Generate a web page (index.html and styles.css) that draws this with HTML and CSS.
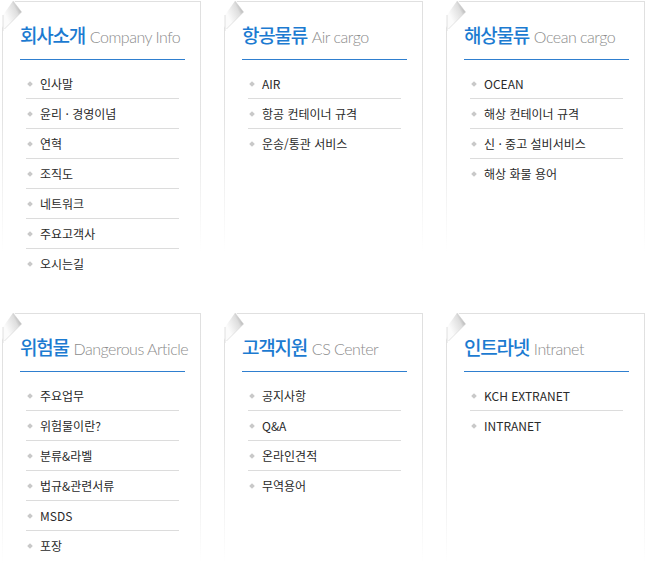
FILE: index.html
```html
<!DOCTYPE html>
<html lang="ko">
<head>
<meta charset="utf-8">
<title>Sitemap</title>
<link rel="stylesheet" href="styles.css">
</head>
<body>
<svg width="0" height="0" class="defs">
  <defs>
    <linearGradient id="curl" x1="0.9" y1="0.1" x2="0.2" y2="0.6">
      <stop offset="0" stop-color="#a8a8a8"/>
      <stop offset="0.35" stop-color="#dedede"/>
      <stop offset="1" stop-color="#fbfbfb"/>
    </linearGradient>
    <symbol id="corner" viewBox="0 0 22 30">
      <polygon points="0,0 13,0 0,27" fill="#fff"/>
      <polygon points="11,0 19.5,11 2.5,28 1,28 1,14" fill="url(#curl)"/>
      <polyline points="11,0 19.5,11 2.5,28" fill="none" stroke="#d2d2d2" stroke-width="0.6"/>
      <line x1="1" y1="14" x2="1" y2="30" stroke="#e0e0e0" stroke-width="1"/>
    </symbol>
  </defs>
</svg>
<div class="grid">
  <section class="card">
    <svg class="curl"><use href="#corner"/></svg>
    <h2 class="title"><span class="ko">회사소개</span> <span class="en">Company Info</span></h2>
    <ul class="menu">
      <li>인사말</li>
      <li>윤리 · 경영이념</li>
      <li>연혁</li>
      <li>조직도</li>
      <li>네트워크</li>
      <li>주요고객사</li>
      <li>오시는길</li>
    </ul>
  </section>
  <section class="card">
    <svg class="curl"><use href="#corner"/></svg>
    <h2 class="title"><span class="ko">항공물류</span> <span class="en">Air cargo</span></h2>
    <ul class="menu">
      <li>AIR</li>
      <li>항공 컨테이너 규격</li>
      <li>운송/통관 서비스</li>
    </ul>
  </section>
  <section class="card">
    <svg class="curl"><use href="#corner"/></svg>
    <h2 class="title"><span class="ko">해상물류</span> <span class="en">Ocean cargo</span></h2>
    <ul class="menu">
      <li>OCEAN</li>
      <li>해상 컨테이너 규격</li>
      <li>신 · 중고 설비서비스</li>
      <li>해상 화물 용어</li>
    </ul>
  </section>
  <section class="card">
    <svg class="curl"><use href="#corner"/></svg>
    <h2 class="title"><span class="ko">위험물</span> <span class="en">Dangerous Article</span></h2>
    <ul class="menu">
      <li>주요업무</li>
      <li>위험물이란?</li>
      <li>분류&amp;라벨</li>
      <li>법규&amp;관련서류</li>
      <li>MSDS</li>
      <li>포장</li>
    </ul>
  </section>
  <section class="card">
    <svg class="curl"><use href="#corner"/></svg>
    <h2 class="title"><span class="ko">고객지원</span> <span class="en">CS Center</span></h2>
    <ul class="menu">
      <li>공지사항</li>
      <li>Q&amp;A</li>
      <li>온라인견적</li>
      <li>무역용어</li>
    </ul>
  </section>
  <section class="card">
    <svg class="curl"><use href="#corner"/></svg>
    <h2 class="title"><span class="ko">인트라넷</span> <span class="en">Intranet</span></h2>
    <ul class="menu">
      <li>KCH EXTRANET</li>
      <li>INTRANET</li>
    </ul>
  </section>
</div>
</body>
</html>
```

FILE: styles.css
```css
html, body {
  margin: 0;
  padding: 0;
  background: #fff;
  overflow: hidden;
}

body {
  font-family: "Noto Sans CJK KR", "Noto Sans", sans-serif;
  color: #333;
}

.defs {
  position: absolute;
  width: 0;
  height: 0;
}

.grid {
  display: grid;
  grid-template-columns: repeat(3, 199px);
  grid-auto-rows: 290px;
  column-gap: 23px;
  row-gap: 22px;
  padding: 1px 0 0 2px;
}

.card {
  position: relative;
  box-sizing: border-box;
  border: 1px solid #e0e0e0;
  border-bottom: 0;
  border-image: linear-gradient(to bottom, #e0e0e0 0%, #e3e3e3 40%, rgba(255,255,255,0) 86%) 1;
  padding: 16px 15px 0 17px;
}

.curl {
  position: absolute;
  left: -1px;
  top: -1px;
  width: 22px;
  height: 30px;
}

.title {
  margin: 0;
  height: 30px;
  line-height: 30px;
  padding-bottom: 11px;
  border-bottom: 1px solid #2f7fcf;
  font-weight: normal;
  white-space: nowrap;
}

.ko {
  font-family: "Noto Sans CJK KR", sans-serif;
  font-size: 19px;
  font-weight: 500;
  letter-spacing: -1.2px;
  color: #1c7bd1;
}

.en {
  font-family: Lato, "Open Sans", sans-serif;
  font-weight: 300;
  font-size: 16px;
  letter-spacing: -0.5px;
  color: #8c8c8c;
  margin-left: -2px;
}

.menu {
  list-style: none;
  margin: 9px 6px 0 6px;
  padding: 0;
}

.menu li {
  position: relative;
  height: 29px;
  line-height: 29px;
  padding-left: 14px;
  font-size: 12px;
  color: #2a2a2a;
  border-bottom: 1px solid #dcdcdc;
  white-space: nowrap;
}

.menu li:last-child {
  border-bottom: 0;
}

.menu li::before {
  content: "";
  position: absolute;
  left: 2px;
  top: 13px;
  width: 4px;
  height: 4px;
  background: #c9c9c9;
  transform: rotate(45deg);
}
```
